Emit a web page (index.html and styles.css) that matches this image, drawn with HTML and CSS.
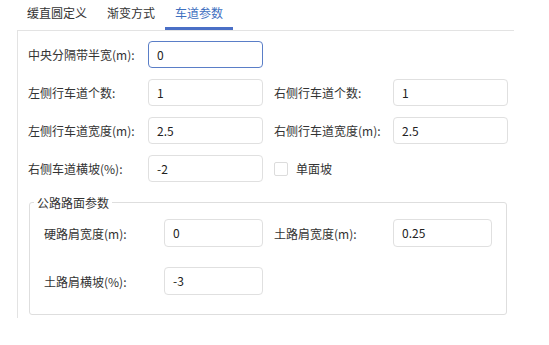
FILE: index.html
```html
<!DOCTYPE html>
<html lang="zh">
<head>
<meta charset="utf-8">
<title>车道参数</title>
<link rel="stylesheet" href="styles.css">
</head>
<body>
<div class="tabs">
  <div class="tab">缓直圆定义</div>
  <div class="tab">渐变方式</div>
  <div class="tab active">车道参数</div>
</div>
<div class="panel">
  <div class="row">
    <label class="lbl">中央分隔带半宽(m):</label>
    <div class="input focus">0</div>
  </div>
  <div class="row">
    <label class="lbl">左侧行车道个数:</label>
    <div class="input">1</div>
    <label class="lbl lbl-r">右侧行车道个数:</label>
    <div class="input">1</div>
  </div>
  <div class="row">
    <label class="lbl">左侧行车道宽度(m):</label>
    <div class="input">2.5</div>
    <label class="lbl lbl-r">右侧行车道宽度(m):</label>
    <div class="input">2.5</div>
  </div>
  <div class="row">
    <label class="lbl">右侧车道横坡(%):</label>
    <div class="input">-2</div>
    <div class="check-wrap"><span class="check"></span><span>单面坡</span></div>
  </div>
  <fieldset class="group">
    <legend class="legend">公路路面参数</legend>
    <div class="grow">
      <label class="glbl">硬路肩宽度(m):</label>
      <div class="input ginput">0</div>
      <label class="glbl glbl-r">土路肩宽度(m):</label>
      <div class="input ginput">0.25</div>
    </div>
    <div class="grow">
      <label class="glbl">土路肩横坡(%):</label>
      <div class="input ginput">-3</div>
    </div>
  </fieldset>
</div>
</body>
</html>
```

FILE: styles.css
```css
html, body {
  margin: 0;
  padding: 0;
  background: #ffffff;
}
body {
  font-family: "Noto Sans CJK SC", "Microsoft YaHei", "Noto Sans", sans-serif;
  font-size: 12px;
  color: #333333;
  width: 549px;
  height: 345px;
  overflow: hidden;
}
.tabs {
  display: flex;
  margin-left: 17px;
  height: 30px;
}
.tab {
  padding: 0 10px;
  height: 27px;
  line-height: 26px;
  color: #333333;
  border-bottom: 3px solid transparent;
}
.tab.active {
  color: #3e6fbf;
  border-bottom-color: #4a6fc6;
}
.panel {
  margin-left: 17px;
  width: 497px;
  height: 288px;
  border-top: 1px solid #e3e3e3;
  border-left: 1px solid #e3e3e3;
  padding: 10px 0 0 10px;
  box-sizing: border-box;
  display: flex;
  flex-direction: column;
  gap: 11px;
}
.row {
  display: flex;
  align-items: center;
  height: 27px;
}
.lbl {
  width: 120px;
  flex: none;
}
.lbl-r {
  margin-left: 11px;
  width: 119px;
}
.input {
  box-sizing: border-box;
  width: 115px;
  height: 27px;
  border: 1px solid #e0e0e0;
  border-radius: 4px;
  padding-left: 8px;
  line-height: 25px;
  color: #222222;
  flex: none;
}
.input.focus {
  border-color: #5a7ec7;
}
.check-wrap {
  margin-left: 11px;
  display: flex;
  align-items: center;
  gap: 8px;
}
.check {
  width: 14px;
  height: 14px;
  box-sizing: border-box;
  border: 1px solid #dcdcdc;
  border-radius: 2px;
  background: #fff;
}
.group {
  margin: 1px 0 0 1px;
  width: 478px;
  box-sizing: border-box;
  border: 1px solid #dedede;
  border-radius: 3px;
  padding: 8px 0 19px 0;
  display: flex;
  flex-direction: column;
  gap: 20px;
  min-width: 0;
}
.legend {
  margin-left: 4px;
  padding: 0 3px;
  line-height: 17px;
  color: #333333;
}
.grow {
  display: flex;
  align-items: center;
  height: 28px;
  padding-left: 14px;
}
.glbl {
  width: 120px;
  flex: none;
}
.glbl-r {
  margin-left: 11px;
  width: 119px;
}
.ginput {
  width: 99px;
  height: 28px;
  line-height: 26px;
}
```
